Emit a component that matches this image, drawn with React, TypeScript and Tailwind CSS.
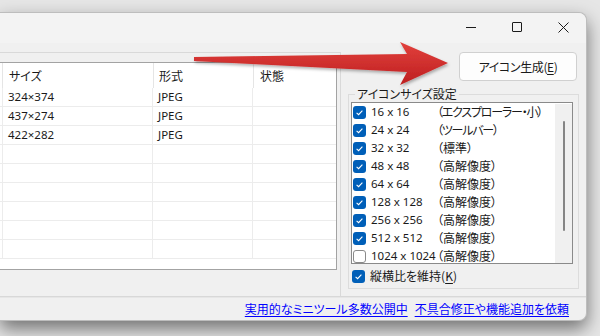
import React from 'react';

const files = [
  { size: '324×374', type: 'JPEG' },
  { size: '437×274', type: 'JPEG' },
  { size: '422×282', type: 'JPEG' },
  { size: '', type: '' },
  { size: '', type: '' },
  { size: '', type: '' },
  { size: '', type: '' },
  { size: '', type: '' },
  { size: '', type: '' },
];

const iconSizes = [
  { size: '16 x 16', label: '（エクスプローラー・小）', narrow: true, on: true },
  { size: '24 x 24', label: '（ツールバー）', narrow: true, on: true },
  { size: '32 x 32', label: '（標準）', narrow: false, on: true },
  { size: '48 x 48', label: '（高解像度）', narrow: false, on: true },
  { size: '64 x 64', label: '（高解像度）', narrow: false, on: true },
  { size: '128 x 128', label: '（高解像度）', narrow: false, on: true },
  { size: '256 x 256', label: '（高解像度）', narrow: false, on: true },
  { size: '512 x 512', label: '（高解像度）', narrow: false, on: true },
  { size: '1024 x 1024', label: '（高解像度）', narrow: false, on: false },
];

// latin text in the reference is narrower than the CJK font's latin glyphs
const latin = "font-['Noto_Sans',sans-serif] text-[11.5px]";

const Check: React.FC<{ on: boolean }> = ({ on }) =>
  on ? (
    <span className="flex h-[13px] w-[13px] shrink-0 items-center justify-center rounded-[3px] bg-[#005fb8]">
      <svg width="13" height="13" viewBox="0 0 13 13">
        <path d="M3.6 6.8 L5.6 8.7 L9.4 4.6" fill="none" stroke="#fff" strokeWidth="1.1" />
      </svg>
    </span>
  ) : (
    <span className="h-[13px] w-[13px] shrink-0 rounded-[3px] border border-[#8a8a8a] bg-white" />
  );

const Arrow = () => (
  <svg className="pointer-events-none absolute left-0 top-0" width="600" height="336" viewBox="0 0 600 336">
    <defs>
      <linearGradient id="red" x1="0" y1="0" x2="0" y2="1">
        <stop offset="0" stopColor="#e2403c" />
        <stop offset="1" stopColor="#bd1f20" />
      </linearGradient>
      <filter id="sh" x="-10%" y="-50%" width="120%" height="200%">
        <feDropShadow dx="1" dy="2" stdDeviation="1.5" floodOpacity="0.3" />
      </filter>
    </defs>
    <polygon
      points="194,57 407,54 400,42 448,63 400,85 407,72 194,61"
      fill="url(#red)"
      filter="url(#sh)"
    />
  </svg>
);

export default function App() {
  return (
    <div className="relative h-[336px] w-[600px] overflow-hidden bg-[#e6e6e6] font-['Noto_Sans_CJK_JP',sans-serif] text-[12px] text-[#1a1a1a] [font-feature-settings:'palt']">
      <div className="mt-[12px] flex h-[309px] w-[587px] flex-col rounded-r-[8px] border border-l-0 border-[#bdbdbd] bg-[#f0f0f0] shadow-[0_8px_18px_rgba(0,0,0,0.5)]">
        {/* title bar */}
        <div className="flex h-[30px] justify-end rounded-tr-[8px] bg-[#f3f3f3] pb-[2px]">
          <div className="flex w-[46px] items-center justify-center">
            <span className="h-px w-[10px] bg-[#1a1a1a]" />
          </div>
          <div className="flex w-[46px] items-center justify-center">
            <span className="h-[10px] w-[10px] rounded-[1px] border border-[#1a1a1a]" />
          </div>
          <div className="flex w-[46px] items-center justify-center">
            <svg width="11" height="11" viewBox="0 0 11 11">
              <path d="M0.5 0.5 L10.5 10.5 M10.5 0.5 L0.5 10.5" stroke="#1a1a1a" strokeWidth="1" />
            </svg>
          </div>
        </div>

        <div className="flex flex-1 flex-col pt-[9px]">
          <div className="flex h-[244px]">
            {/* file list */}
            <div className="w-[341px] shrink-0 border-r border-t border-[#d9d9d9] pt-[9px]">
              <div className="h-[208px] w-[337px] overflow-hidden border-y border-r border-[#a3a3a3] bg-white">
                <div className="flex h-[25px] items-center">
                  <div className="h-full w-[3px] border-r border-[#e5e5e5]" />
                  <div className="w-[150px] pl-[6px]">サイズ</div>
                  <div className="h-full border-r border-[#e5e5e5]" />
                  <div className="w-[99px] pl-[5px]">形式</div>
                  <div className="h-full border-r border-[#e5e5e5]" />
                  <div className="flex-1 pl-[6px]">状態</div>
                </div>
                {files.map((f, i) => (
                  <div key={i} className="flex h-[19px] items-center border-b border-[#ececec]">
                    <div className="h-full w-[3px] border-r border-[#ececec]" />
                    <div className={`flex h-full w-[150px] items-center border-r border-[#ececec] pl-[5px] ${latin}`}>{f.size}</div>
                    <div className={`flex h-full w-[100px] items-center border-r border-[#ececec] pl-[5px] ${latin}`}>{f.type}</div>
                    <div className="flex-1" />
                  </div>
                ))}
              </div>
            </div>

            {/* right column */}
            <div className="flex flex-1 flex-col">
              <div className="flex justify-end pr-[9px]">
                <button className="flex h-[29px] w-[118px] items-center justify-center rounded-[4px] border border-[#d0d0d0] bg-[#fdfdfd] pt-[1px] tracking-[-0.4px]">
                  アイコン生成(<span className="underline underline-offset-2">E</span>)
                </button>
              </div>
              <fieldset className="ml-[7px] mr-[7px] mt-[5px] border border-[#dcdcdc] pb-[3px] pl-[2px] pr-[5px]">
                <legend className="ml-[4px] px-[2px] leading-[16px]">アイコンサイズ設定</legend>
                <div className="flex h-[162px] overflow-hidden border border-[#8a8a8a] bg-white">
                  <div className="flex-1 pl-[1px]">
                    {iconSizes.map((s) => (
                      <div key={s.size} className="flex h-[18px] items-center">
                        <Check on={s.on} />
                        <span className={`ml-[5px] w-[66px] shrink-0 whitespace-nowrap ${latin}`}>{s.size}</span>
                        <span className={s.narrow ? 'whitespace-nowrap tracking-[-1.2px]' : 'whitespace-nowrap'}>{s.label}</span>
                      </div>
                    ))}
                  </div>
                  <div className="mt-[1px] flex w-[17px] justify-center bg-[#f0f0f0] pt-[17px]">
                    <span className="h-[110px] w-[2px] rounded-full bg-[#858585]" />
                  </div>
                </div>
                <div className="mt-[3px] flex h-[18px] items-center pl-[1px]">
                  <Check on />
                  <span className="ml-[5px]">
                    縦横比を維持(<span className="underline underline-offset-2">K</span>)
                  </span>
                </div>
              </fieldset>
            </div>
          </div>

          {/* status bar */}
          <div className="h-px bg-[#d8d8d8]" />
          <div className="h-px bg-[#e6e6e6]" />
          <div className="flex flex-1 items-center justify-end gap-[7px] pr-[17px] text-[#0000ff]">
            <span className="underline underline-offset-2">実用的なミニツール多数公開中</span>
            <span className="underline underline-offset-2">不具合修正や機能追加を依頼</span>
          </div>
        </div>
      </div>
      <Arrow />
    </div>
  );
}
